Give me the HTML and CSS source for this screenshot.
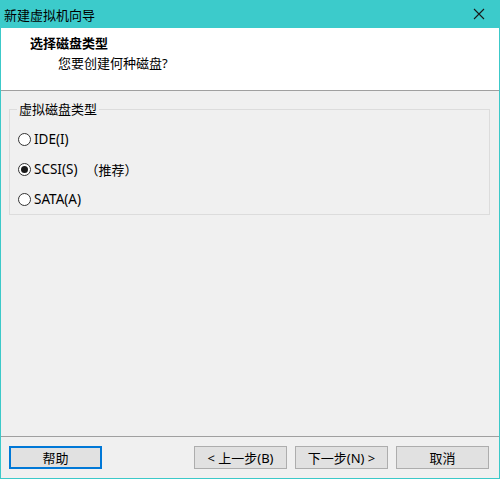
FILE: index.html
```html
<!DOCTYPE html>
<html lang="zh-CN">

<head>
    <meta charset="UTF-8">
    <meta name="viewport" content="width=device-width, initial-scale=1.0">
    <title>新建虚拟机向导</title>

    <!--Style-->

    <link rel="stylesheet" href="styles.css">
</head>

<body>
    <div class="window">
        <div class="titleBar">
            <span class="titleText">新建虚拟机向导</span>
            <svg class="closeIcon" width="12" height="12" viewBox="0 0 12 12">
                <path d="M1 1 L11 11 M11 1 L1 11" stroke="#1a1a1a" stroke-width="1.1" fill="none" />
            </svg>
        </div>

        <div class="header">
            <div class="headTitle">选择磁盘类型</div>
            <div class="headSub">您要创建何种磁盘?</div>
        </div>

        <div class="content">
            <fieldset class="groupBox">
                <legend>虚拟磁盘类型</legend>
                <label class="radioRow">
                    <span class="radio"></span>
                    <span class="radioText">IDE(I)</span>
                </label>
                <label class="radioRow">
                    <span class="radio checked"></span>
                    <span class="radioText">SCSI(S)</span>
                    <span class="hint">（推荐）</span>
                </label>
                <label class="radioRow">
                    <span class="radio"></span>
                    <span class="radioText">SATA(A)</span>
                </label>
            </fieldset>
        </div>

        <div class="footer">
            <button class="btn btnHelp">帮助</button>
            <div class="navButtons">
                <button class="btn">&lt; 上一步(B)</button>
                <button class="btn">下一步(N) &gt;</button>
                <button class="btn btnCancel">取消</button>
            </div>
        </div>
    </div>
</body>

</html>
```

FILE: styles.css
```css
html,
body {
    margin: 0;
    padding: 0;
    height: 100%;
}

body {
    font-family: "Noto Sans", "Noto Sans CJK SC", sans-serif;
    font-size: 13px;
    color: #000;
}

.window {
    box-sizing: border-box;
    width: 500px;
    height: 479px;
    display: flex;
    flex-direction: column;
    background-color: #f0f0f0;
    border: 1px solid #3cc9c9;
    border-top: none;
}

.titleBar {
    height: 28px;
    margin: 0 -1px;
    background-color: #3ccbcb;
    display: flex;
    align-items: center;
    justify-content: space-between;
    padding: 0 15px 0 4px;
}

.titleText {
    font-size: 13px;
    color: #000;
}

.header {
    height: 63px;
    background-color: #fff;
    border-bottom: 1px solid #a0a0a0;
    box-sizing: border-box;
    padding: 4px 0 0 29px;
}

.headTitle {
    font-weight: bold;
    line-height: 19px;
    margin-top: 2px;
}

.headSub {
    padding-left: 28px;
    line-height: 19px;
    margin-top: 1px;
}

.content {
    flex: 1;
    padding: 10px 9px 0 8px;
}

.groupBox {
    margin: 0;
    padding: 7px 0 3px 8px;
    border: 1px solid #dcdcdc;
    height: 114px;
    box-sizing: border-box;
}

.groupBox legend {
    padding: 0 2px;
    margin-left: -1px;
    line-height: 16px;
}

.radioRow {
    display: flex;
    align-items: center;
    height: 30px;
    gap: 3px;
}

.radioText {
    font-size: 13.5px;
}

.radio {
    box-sizing: border-box;
    width: 13px;
    height: 13px;
    border: 1px solid #333;
    border-radius: 50%;
    background-color: #fff;
    position: relative;
}

.radio.checked::after {
    content: "";
    position: absolute;
    left: 2px;
    top: 2px;
    width: 7px;
    height: 7px;
    border-radius: 50%;
    background-color: #1a1a1a;
}

.hint {
    margin-left: 5px;
}

.footer {
    height: 42px;
    border-top: 1px solid #a0a0a0;
    display: flex;
    justify-content: space-between;
    align-items: flex-start;
    padding: 9px 10px 0 8px;
    box-sizing: border-box;
}

.navButtons {
    display: flex;
    gap: 8px;
}

.btn {
    width: 93px;
    height: 23px;
    box-sizing: border-box;
    background-color: #e1e1e1;
    border: 1px solid #adadad;
    font-family: "Noto Sans", "Noto Sans CJK SC", sans-serif;
    font-size: 13px;
    color: #000;
    padding: 0;
}

.btnHelp {
    border: 2px solid #0078d7;
}
```
